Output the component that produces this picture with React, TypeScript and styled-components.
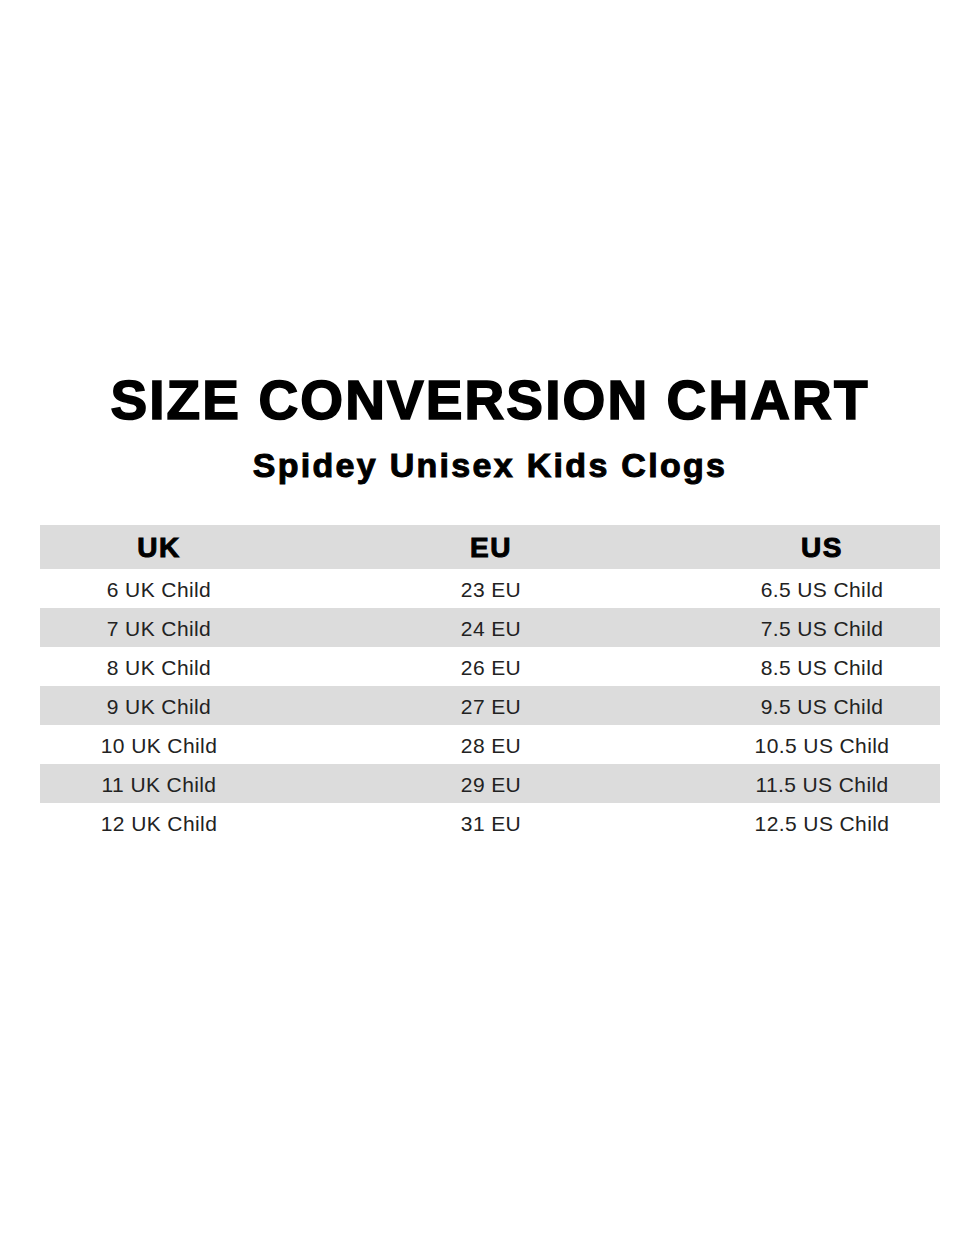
import styled, { createGlobalStyle } from 'styled-components';

const rows = [
  ['6 UK Child', '23 EU', '6.5 US Child'],
  ['7 UK Child', '24 EU', '7.5 US Child'],
  ['8 UK Child', '26 EU', '8.5 US Child'],
  ['9 UK Child', '27 EU', '9.5 US Child'],
  ['10 UK Child', '28 EU', '10.5 US Child'],
  ['11 UK Child', '29 EU', '11.5 US Child'],
  ['12 UK Child', '31 EU', '12.5 US Child'],
];

const GlobalStyle = createGlobalStyle`
  body {
    margin: 0;
    background: #ffffff;
    font-family: "Liberation Sans", Arial, sans-serif;
  }
`;

export default function App() {
  return (
    <>
      <GlobalStyle />
      <Page>
        <Title>SIZE CONVERSION CHART</Title>
        <Subtitle>Spidey Unisex Kids Clogs</Subtitle>
        <Table>
          <HeadRow>
            <HeadCell>UK</HeadCell>
            <HeadCell>EU</HeadCell>
            <HeadCell>US</HeadCell>
          </HeadRow>
          {rows.map((r, i) => (
            <Row key={i} shaded={i % 2 === 1}>
              {r.map((c) => (
                <Cell key={c}>{c}</Cell>
              ))}
            </Row>
          ))}
        </Table>
      </Page>
    </>
  );
}

const Page = styled.div`
  width: 980px;
  height: 1249px;
  padding-top: 370px;
  box-sizing: border-box;
  display: flex;
  flex-direction: column;
  align-items: center;
`;

const Title = styled.h1`
  margin: 0;
  font-family: "Liberation Sans", Arial, sans-serif;
  font-weight: 700;
  font-size: 55px;
  line-height: 60px;
  letter-spacing: 2.1px;
  color: #000;
  -webkit-text-stroke: 1.6px #000;
`;

const Subtitle = styled.h2`
  margin: 15px 0 0;
  font-weight: 700;
  font-size: 34px;
  line-height: 40px;
  letter-spacing: 2.3px;
  color: #000;
  -webkit-text-stroke: 1px #000;
`;

const Table = styled.div`
  margin-top: 40px;
  width: 900px;
  display: flex;
  flex-direction: column;
`;

const Grid = styled.div`
  display: grid;
  grid-template-columns: 238px 1fr 236px;
  align-items: center;
`;

const HeadRow = styled(Grid)`
  height: 44px;
  background: #dcdcdc;
`;

const Row = styled(Grid)<{ shaded: boolean }>`
  height: 39px;
  padding-top: 2px;
  box-sizing: border-box;
  background: ${({ shaded }) => (shaded ? '#dcdcdc' : '#ffffff')};
`;

const HeadCell = styled.div`
  text-align: center;
  padding-top: 2px;
  font-weight: 700;
  font-size: 28px;
  color: #000;
  -webkit-text-stroke: 1px #000;
  letter-spacing: 1.5px;
`;

const Cell = styled.div`
  text-align: center;
  font-size: 21px;
  letter-spacing: 0.4px;
  color: #222;
`;
